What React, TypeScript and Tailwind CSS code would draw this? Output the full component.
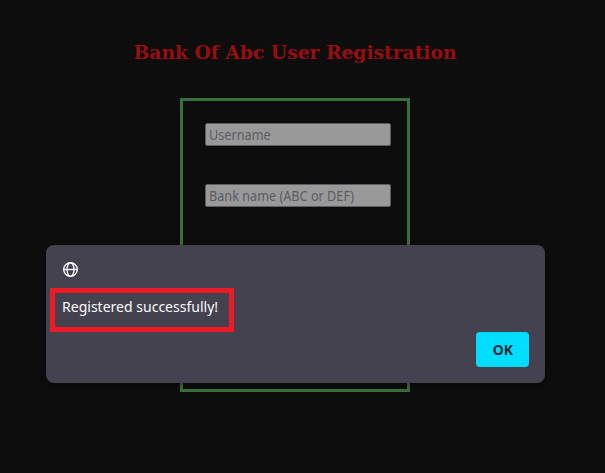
const fields = ["Username", "Bank name (ABC or DEF)"];

function GlobeIcon() {
  return (
    <svg
      className="h-[15px] w-[15px]"
      viewBox="0 0 15 15"
      fill="none"
      stroke="currentColor"
      strokeWidth="1.35"
    >
      <circle cx="7.5" cy="7.5" r="6.8" />
      <ellipse cx="7.5" cy="7.5" rx="3.5" ry="6.8" />
      <path d="M1 7.5h13" />
    </svg>
  );
}

function RegistrationForm() {
  return (
    <form className="mt-[33px] ml-[180px] h-[294px] w-[230px] border-3 border-[#396f3a] px-[22px] pt-[22px]">
      {fields.map((field) => (
        <div
          key={field}
          className="mb-[38px] h-[23px] w-[186px] rounded-[2px] border border-[#5d5c64] bg-[#99999a] px-[3px] text-[14px] leading-[22px] whitespace-nowrap text-[#5c5b62]"
        >
          <span className="inline-block origin-left scale-x-[0.905]">
            {field}
          </span>
        </div>
      ))}
    </form>
  );
}

function AlertDialog() {
  return (
    <div
      role="alertdialog"
      className="absolute top-[245px] left-[46px] flex h-[138px] w-[499px] flex-col rounded-lg bg-[#44424e] text-[#fbfbfe] shadow-[0_2px_6px_rgba(0,0,0,0.4)]"
    >
      <div className="mt-[17px] ml-[17px]">
        <GlobeIcon />
      </div>
      {/* Highlighted message */}
      <div className="mt-[11px] ml-1 h-11 w-[184px] border-5 border-[#ed1c24] pl-[6.6px] text-[15px] leading-[27px] whitespace-nowrap">
        <span className="inline-block origin-left scale-x-[0.935]">
          Registered successfully!
        </span>
      </div>
      <button className="mr-4 h-[35px] w-[53px] self-end rounded-[4px] bg-[#00ddff] text-[15px] font-bold text-[#2b2a33]">
        <span className="inline-block scale-x-[0.93]">OK</span>
      </button>
    </div>
  );
}

export default function App() {
  return (
    <div className="relative h-[473px] w-[605px] overflow-hidden bg-[#0d0d0e] font-['Noto_Sans',sans-serif]">
      <h1 className="pt-[40px] pr-[15px] text-center font-['DejaVu_Serif',serif] text-[18.72px] leading-[25px] font-bold whitespace-nowrap text-[#990d11]">
        Bank Of Abc User Registration
      </h1>
      <RegistrationForm />
      <AlertDialog />
    </div>
  );
}
